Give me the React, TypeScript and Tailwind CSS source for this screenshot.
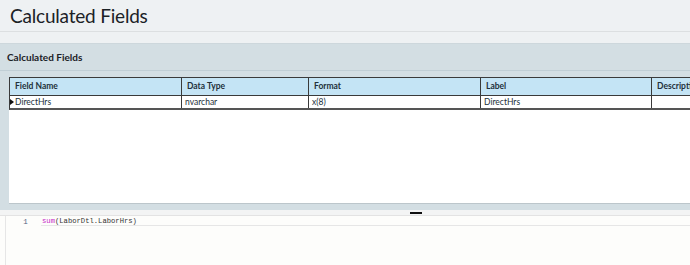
import React from 'react';

const columns = [
  { name: 'Field Name', width: 'w-[172px]', value: 'DirectHrs' },
  { name: 'Data Type', width: 'w-[127px]', value: 'nvarchar' },
  { name: 'Format', width: 'w-[172px]', value: 'x(8)' },
  { name: 'Label', width: 'w-[171px]', value: 'DirectHrs' },
  { name: 'Description', width: 'w-[120px]', value: '' },
];

export default function App() {
  return (
    <div className="w-[690px] h-[265px] overflow-hidden bg-[#fdfdfb] font-['Lato',sans-serif] text-[#1f2a33]">
      {/* page title */}
      <div className="h-[32px] bg-[#eef1f3] border-b border-[#dcdfe1] pl-[10px] flex items-center">
        <h1 className="text-[19px] leading-none tracking-[-0.2px] text-[#1b2126]">Calculated Fields</h1>
      </div>
      <div className="h-[12px] bg-[#eef1f3] border-b border-[#cdd7dc]" />

      {/* grid panel */}
      <div className="bg-[#d3dee3]">
        <div className="h-[27px] flex items-center px-[7px] border-b border-[#c0ced5]">
          <span className="text-[10px] font-bold text-[#1b2126]">Calculated Fields</span>
        </div>
        <div className="pl-[9px] pt-[6px]">
          <div className="h-[127px] bg-white border-b border-[#bcc6cb] overflow-hidden">
            <div className="flex border-t border-l border-[#3a3a3a] bg-[#c4e4f5] h-[18px]">
              {columns.map((c) => (
                <div
                  key={c.name}
                  className={`${c.width} shrink-0 border-r border-[#3a3a3a] px-[5px] flex items-center text-[8.5px] font-bold text-[#22303a]`}
                >
                  {c.name}
                </div>
              ))}
            </div>
            <div className="flex border-t border-l border-b-2 border-[#3a3a3a] border-b-[#555] bg-white h-[15px]">
              {columns.map((c, i) => (
                <div
                  key={c.name}
                  className={`${c.width} shrink-0 border-r border-[#3a3a3a] flex items-center text-[8.5px] text-[#22303a] ${i === 0 ? 'pl-0' : 'px-[3px]'}`}
                >
                  {i === 0 && (
                    <svg width="4" height="6" viewBox="0 0 4 6" className="mr-[1px]">
                      <path d="M0 0 L4 3 L0 6 Z" fill="#111" />
                    </svg>
                  )}
                  {c.value}
                </div>
              ))}
            </div>
          </div>
        </div>
        <div className="h-[6px]" />
      </div>

      {/* splitter */}
      <div className="h-[5px] bg-[#f3f4f4] flex justify-center">
        <div className="mt-[2px] ml-[142px] w-[12px] h-[1.5px] bg-[#111]" />
      </div>

      {/* expression editor */}
      <div className="border-t border-[#e3e3e3] flex h-[50px]">
        <div className="w-[6px] border-r border-[#e6e6e6]" />
        <div className="w-[35px] flex justify-center pt-[1px]">
          <span className="font-['Liberation_Mono',monospace] text-[7.5px] leading-[10px] text-[#4d6380] pl-[4px]">1</span>
        </div>
        <div className="flex-1">
          <div className="h-[10px] border-b border-[#e6e6e6] font-['Liberation_Mono',monospace] text-[7.2px] leading-[10px] text-[#333] pl-[1px]">
            <span className="text-[#c71fc7]">sum</span>(LaborDtl.LaborHrs)
          </div>
        </div>
      </div>
    </div>
  );
}
